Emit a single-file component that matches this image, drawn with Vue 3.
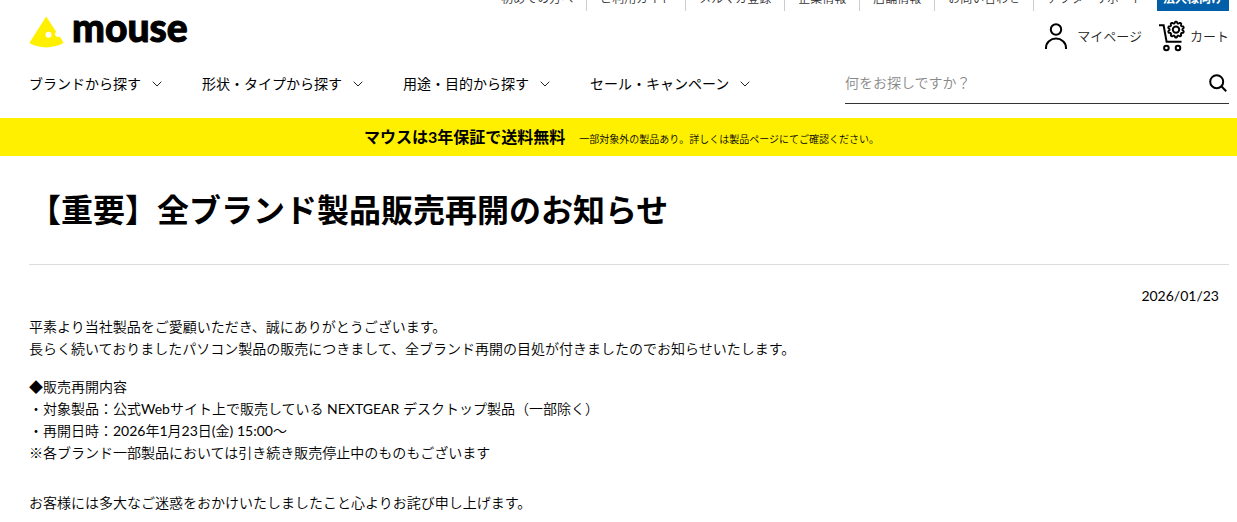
<script setup>
const utilityLinks = ['初めての方へ', 'ご利用ガイド', 'メルマガ登録', '企業情報', '店舗情報', 'お問い合わせ', 'アフターサポート']
const categories = ['ブランドから探す', '形状・タイプから探す', '用途・目的から探す', 'セール・キャンペーン']

// Gear outline with ten rounded teeth, centred on (cx, cy).
function gearPath(cx, cy, radius, depth, teeth) {
  const points = Array.from({ length: 120 }, (_, i) => {
    const angle = (i / 120) * Math.PI * 2
    const r = radius + depth * Math.tanh(2 * Math.cos(angle * teeth))
    return `${(cx + r * Math.sin(angle)).toFixed(2)} ${(cy - r * Math.cos(angle)).toFixed(2)}`
  })
  return `M${points.join('L')}Z`
}
const gear = gearPath(18, 9.6, 7.2, 0.8, 10)
</script>

<template>
  <div class="page">
    <header class="header">
      <nav class="utility" aria-label="ご案内">
        <a v-for="link in utilityLinks" :key="link" class="utility-link" href="#">{{ link }}</a>
        <a class="corporate" href="#">法人様向け</a>
      </nav>

      <div class="brand-row">
        <a class="logo" href="#" aria-label="mouse">
          <svg class="cheese" viewBox="0 0 35 32" aria-hidden="true">
            <path d="M17.2 0.4 L27.2 15.8 A2.7 2.7 0 0 0 27.9 20.6 Q29.3 21.6 30.9 20.6 L34.6 27.1 Q26 31.4 17.2 31.4 Q8.4 31.4 0.3 27.1 Z" fill="#fff000" />
            <circle cx="19.5" cy="18.8" r="3" fill="#fff" />
          </svg>
          <span class="wordmark">mouse</span>
        </a>
        <div class="account">
          <a class="account-link" href="#">
            <svg class="person" viewBox="0 0 24 28" fill="none" stroke="#000" stroke-width="2" aria-hidden="true">
              <circle cx="13" cy="7.5" r="5.2" />
              <path d="M3 27 V25.8 A10 9.3 0 0 1 23 25.8 V27" />
            </svg>
            <span>マイページ</span>
          </a>
          <a class="account-link" href="#">
            <svg class="cart" viewBox="0 0 28 32" fill="none" stroke="#000" stroke-width="2" aria-hidden="true">
              <path d="M1 5.2 H5.6 L8.6 21.7 H23.5" />
              <path :d="gear" stroke-width="1.9" stroke-linejoin="round" />
              <circle cx="18" cy="9.6" r="3.2" />
              <circle cx="8.4" cy="28" r="2.3" />
              <circle cx="20" cy="28" r="2.3" />
            </svg>
            <span>カート</span>
          </a>
        </div>
      </div>

      <div class="nav-row">
        <nav class="categories" aria-label="製品カテゴリ">
          <button v-for="item in categories" :key="item" class="category" type="button">
            <span>{{ item }}</span>
            <svg class="chevron" viewBox="0 0 10 6" fill="none" stroke="#222" aria-hidden="true">
              <path d="M0.7 0.7 L5 5 L9.3 0.7" />
            </svg>
          </button>
        </nav>
        <form class="search" role="search" @submit.prevent>
          <input class="search-input" type="search" aria-label="製品を検索" placeholder="何をお探しですか？" />
          <button class="search-button" type="submit" aria-label="検索">
            <svg viewBox="0 0 18 18" fill="none" stroke="#000" stroke-width="2" aria-hidden="true">
              <circle cx="7.7" cy="7.7" r="6.5" />
              <path d="M12.3 12.3 L17.2 17.2" />
            </svg>
          </button>
        </form>
      </div>
    </header>

    <a class="notice" href="#">
      <strong class="notice-main">マウスは3年保証で送料無料</strong>
      <small class="notice-sub">一部対象外の製品あり。詳しくは製品ページにてご確認ください。</small>
    </a>

    <main class="article">
      <h1 class="title">【重要】全ブランド製品販売再開のお知らせ</h1>
      <time class="date" datetime="2026-01-23">2026/01/23</time>
      <p class="text">
        平素より当社製品をご愛顧いただき、誠にありがとうございます。<br />
        長らく続いておりましたパソコン製品の販売につきまして、全ブランド再開の目処が付きましたのでお知らせいたします。
      </p>
      <p class="text details">
        ◆販売再開内容<br />
        ・対象製品：公式Webサイト上で販売している NEXTGEAR デスクトップ製品（一部除く）<br />
        ・再開日時：2026年1月23日(金) 15:00～<br />
        ※各ブランド一部製品においては引き続き販売停止中のものもございます
      </p>
      <p class="text closing">お客様には多大なご迷惑をおかけいたしましたこと心よりお詫び申し上げます。</p>
    </main>
  </div>
</template>

<style>
body {
  margin: 0;
  background: #fff;
}
</style>

<style scoped>
.page {
  font-family: Lato, "Noto Sans CJK JP DemiLight", "Noto Sans CJK JP Light", "Noto Sans CJK JP", sans-serif;
  font-size: 14px;
  line-height: 22px;
  color: #000;
}

a {
  color: inherit;
  text-decoration: none;
}

svg {
  display: block;
  flex: none;
}

.header {
  padding: 0 8px 14px 29px;
}

.utility {
  display: flex;
  justify-content: flex-end;
  align-items: flex-end;
  height: 11px;
  font-size: 12px;
  line-height: 24px;
  color: #333;
}

.utility-link {
  padding: 0 13px;
  white-space: nowrap;
}

.utility-link + .utility-link {
  border-left: 1px solid #ccc;
}

.corporate {
  margin-left: 1px;
  padding: 0 6px;
  background: #005fa8;
  color: #fff;
  font-weight: 700;
  white-space: nowrap;
}

.brand-row {
  display: flex;
  justify-content: space-between;
  align-items: center;
  height: 50px;
}

.logo {
  display: flex;
  align-items: flex-start;
  gap: 8px;
  align-self: flex-start;
  padding-top: 5px;
}

.cheese {
  width: 35px;
  height: 32px;
}

.wordmark {
  font-size: 39px;
  font-weight: 900;
  line-height: 22px;
  -webkit-text-stroke: 1px #000;
}

.account {
  display: flex;
  gap: 16px;
  font-size: 13px;
  color: #222;
}

.account-link {
  display: flex;
  align-items: center;
  gap: 4px;
}

.person {
  width: 24px;
  height: 28px;
  margin-right: 6px;
}

.cart {
  width: 28px;
  height: 32px;
}

.nav-row {
  display: flex;
  justify-content: space-between;
  align-items: center;
  gap: 24px;
  margin-top: 2px;
}

.categories {
  display: flex;
  gap: 40px;
}

.category {
  display: flex;
  align-items: center;
  gap: 11px;
  padding: 0;
  border: 0;
  background: none;
  font: inherit;
  font-family: Lato, "Noto Sans CJK JP", sans-serif;
  color: inherit;
  white-space: nowrap;
  cursor: pointer;
}

.chevron {
  width: 10px;
  height: 6px;
}

.search {
  display: flex;
  align-items: center;
  flex: 0 1 384px;
  height: 40px;
  border-bottom: 1px solid #333;
}

.search-input {
  flex: 1;
  min-width: 0;
  padding: 0;
  border: 0;
  outline: 0;
  background: none;
  font: inherit;
  color: inherit;
}

.search-input::placeholder {
  color: #888;
  opacity: 1;
}

.search-button {
  padding: 0 2px;
  border: 0;
  background: none;
  cursor: pointer;
}

.search-button svg {
  width: 18px;
  height: 18px;
}

.notice {
  display: flex;
  justify-content: center;
  align-items: baseline;
  gap: 14px;
  padding: 8px 8px 6px 14px;
  background: #fff000;
}

.notice-main,
.title,
.corporate {
  font-family: Lato, "Noto Sans CJK JP", sans-serif;
}

.notice-main {
  font-size: 16px;
}

.notice-sub {
  font-size: 10px;
}

.article {
  display: flex;
  flex-direction: column;
  padding: 0 8px 24px 29px;
}

.title {
  margin: 0;
  padding: 30px 0;
  border-bottom: 1px solid #ddd;
  font-size: 32px;
  line-height: 48px;
}

.date {
  align-self: flex-end;
  margin: 20px 10px 9px 0;
}

.text {
  margin: 0;
}

.details {
  margin-top: 16px;
}

.closing {
  margin-top: 28px;
}
</style>
